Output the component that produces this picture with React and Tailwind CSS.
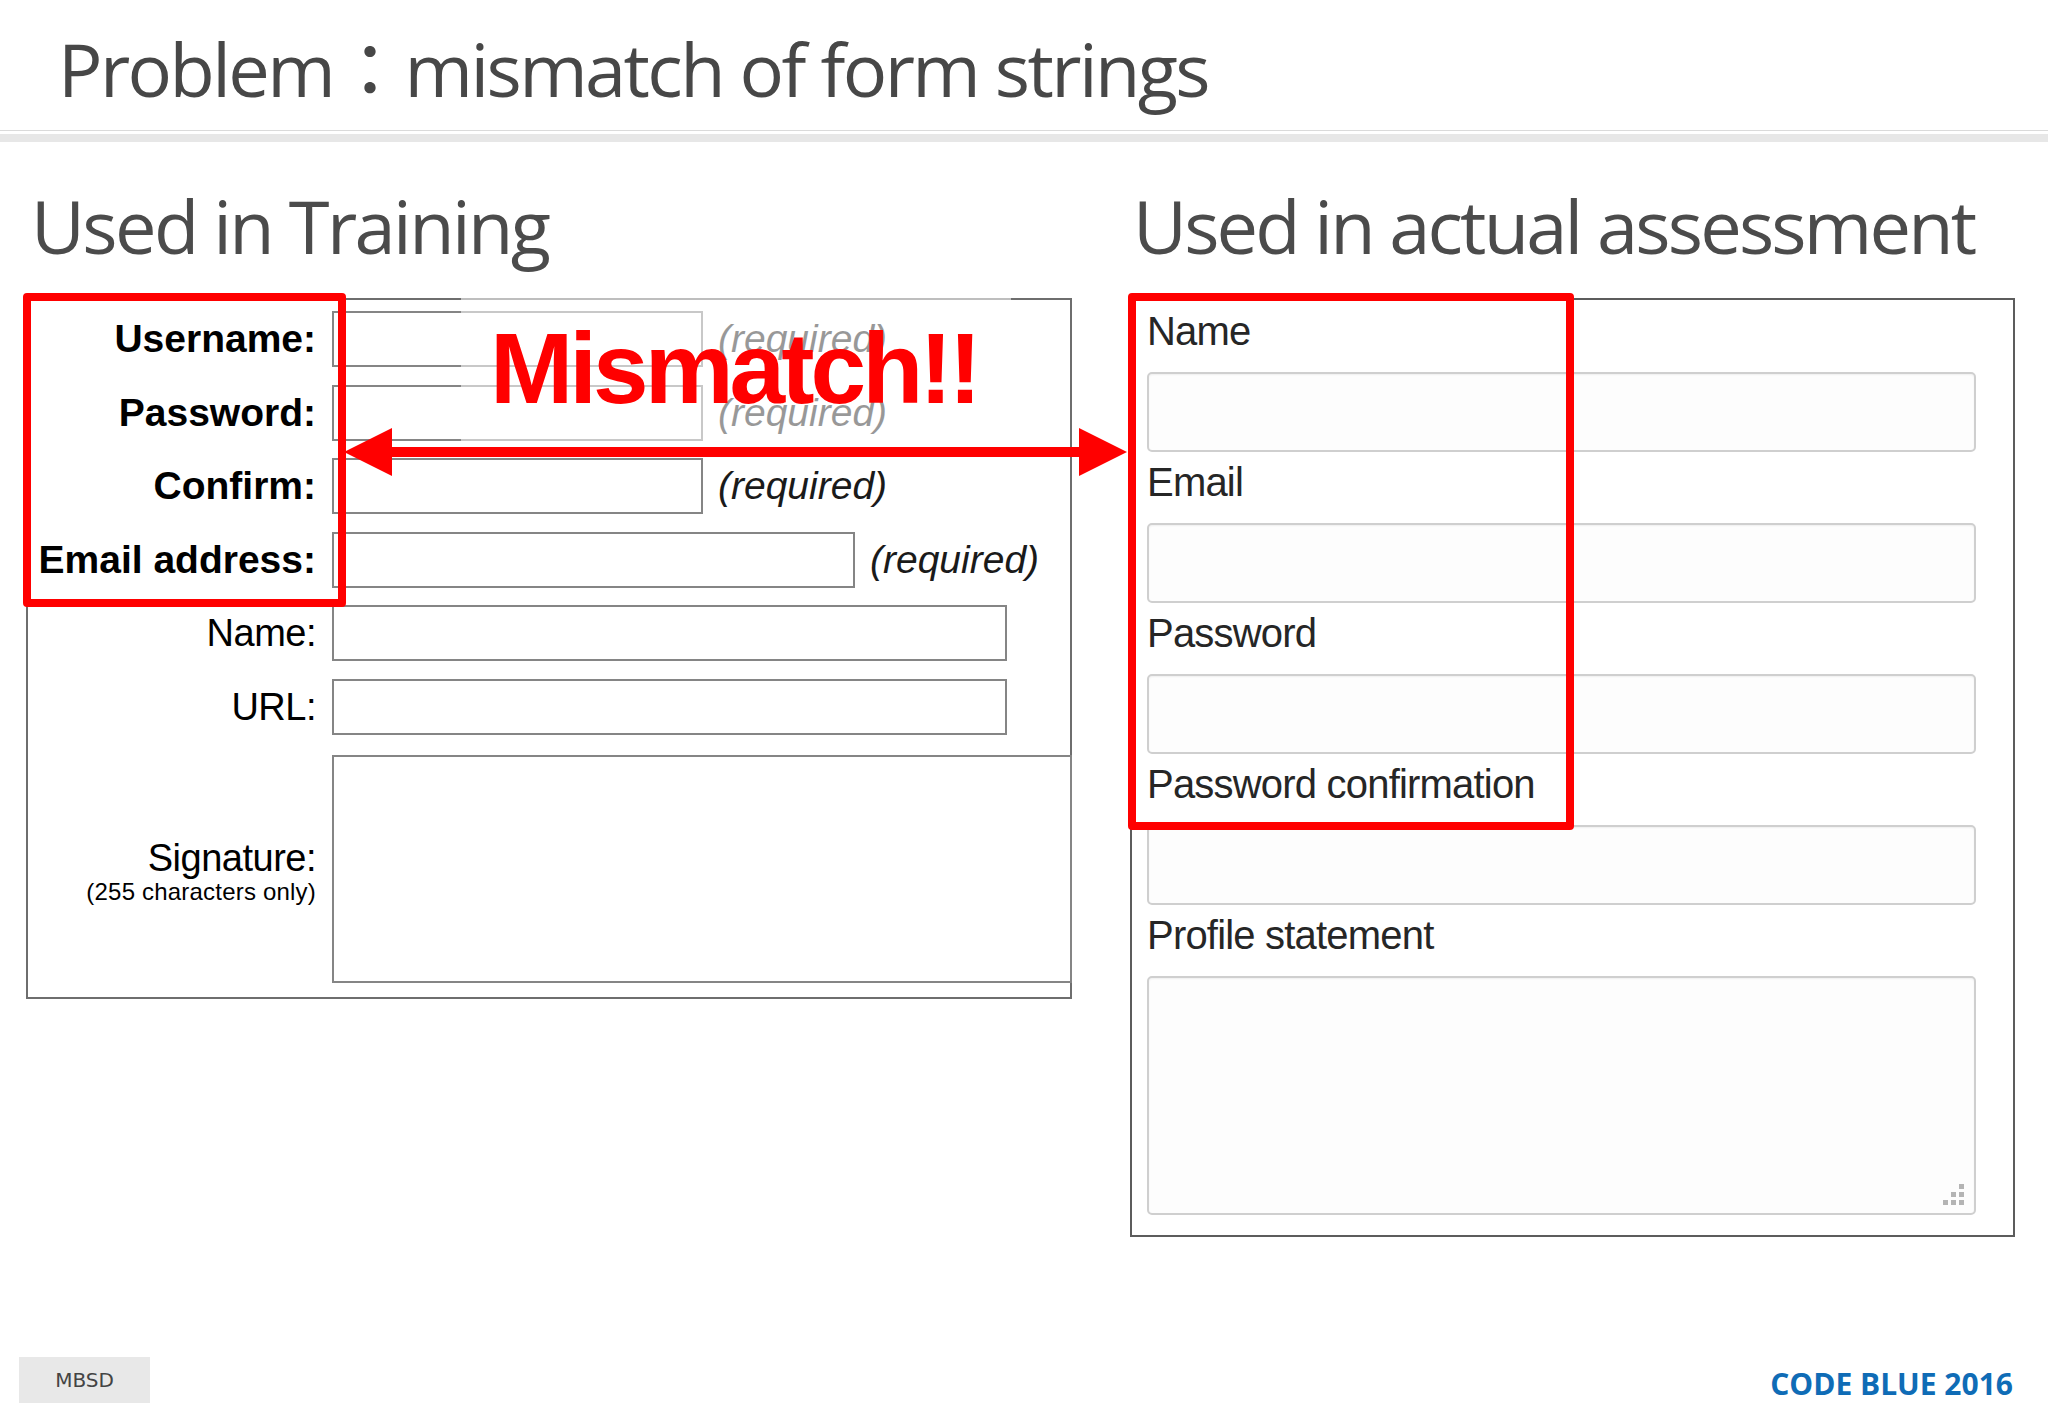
import React from "react";

const leftRows = [
  { label: "Username:", bold: true, w: "w-[371px]", req: true },
  { label: "Password:", bold: true, w: "w-[371px]", req: true },
  { label: "Confirm:", bold: true, w: "w-[371px]", req: true },
  { label: "Email address:", bold: true, w: "w-[523px]", req: true },
  { label: "Name:", bold: false, w: "w-[675px]", req: false },
  { label: "URL:", bold: false, w: "w-[675px]", req: false },
];

const rightRows = ["Name", "Email", "Password", "Password confirmation"];

function ResizeGrip() {
  return (
    <svg className="absolute right-[8px] bottom-[6px]" width="26" height="26" viewBox="0 0 26 26">
      <rect x="19" y="3" width="5" height="5" fill="#b4b4b4" />
      <rect x="11" y="11" width="5" height="5" fill="#b4b4b4" />
      <rect x="19" y="11" width="5" height="5" fill="#b4b4b4" />
      <rect x="3" y="19" width="5" height="5" fill="#b4b4b4" />
      <rect x="11" y="19" width="5" height="5" fill="#b4b4b4" />
      <rect x="19" y="19" width="5" height="5" fill="#b4b4b4" />
    </svg>
  );
}

export default function App() {
  return (
    <div className="relative w-[2048px] h-[1418px] bg-white overflow-hidden flex flex-col font-['Liberation_Sans',Arial,sans-serif]">
      {/* Title */}
      <div className="pl-[58px] pt-[19px] h-[119px] text-[74px] leading-[100px] text-[#474747] font-['Open_Sans','Noto_Sans_CJK_JP',sans-serif] tracking-[-2.6px] whitespace-nowrap">
        Problem：mismatch of form strings
      </div>
      <div className="mt-[11px] h-px bg-[#dadada]" />
      <div className="mt-[3px] h-[8px] bg-[#e7e7e7]" />

      {/* Main */}
      <div className="flex mt-[34px]">
        {/* Left column */}
        <div className="ml-[26px] w-[1046px] flex flex-col">
          <div className="pl-[5px] h-[100px] text-[74px] leading-[100px] text-[#4b4b4b] font-['Open_Sans',sans-serif] tracking-[-2.6px] whitespace-nowrap">
            Used in Training
          </div>
          <div className="mt-[22px] w-[1046px] border-2 border-[#6e6e6e] pt-[11px] pb-[14px] flex flex-col gap-[17.6px] bg-white">
            {leftRows.map((r) => (
              <div key={r.label} className="flex items-center h-[56px]">
                <div
                  className={
                    r.bold
                      ? "w-[288px] shrink-0 text-right text-[39px] leading-[56px] font-bold text-black whitespace-nowrap"
                      : "w-[288px] shrink-0 text-right text-[38px] leading-[56px] tracking-[-0.5px] text-black whitespace-nowrap"
                  }
                >
                  {r.label}
                </div>
                <div className={"ml-[16px] shrink-0 h-[56px] border-2 border-[#858585] bg-white " + r.w} />
                {r.req && (
                  <div className="ml-[15px] text-[39px] leading-[56px] italic text-[#1a1a1a] whitespace-nowrap">
                    (required)
                  </div>
                )}
              </div>
            ))}
            <div className="flex items-center mt-[2.4px]">
              <div className="w-[288px] shrink-0 flex flex-col items-end pt-[6px] text-black whitespace-nowrap">
                <div className="text-[38px] leading-[40px] tracking-[-0.5px]">Signature:</div>
                <div className="text-[24px] leading-[28px] tracking-[0.2px]">(255 characters only)</div>
              </div>
              <div className="ml-[16px] shrink-0 w-[740px] h-[228px] border-2 border-[#858585] bg-white" />
            </div>
          </div>
        </div>

        {/* Right column */}
        <div className="ml-[58px] w-[885px] flex flex-col">
          <div className="pl-[3px] h-[100px] text-[74px] leading-[100px] text-[#4b4b4b] font-['Open_Sans',sans-serif] tracking-[-2.8px] whitespace-nowrap">
            Used in actual assessment
          </div>
          <div className="mt-[22px] w-[885px] border-2 border-[#5c5c5c] pl-[15px] pr-[37px] pt-px pb-[20px] flex flex-col bg-white">
            {rightRows.map((l) => (
              <React.Fragment key={l}>
                <div className="h-[71px] text-[40px] leading-[60px] tracking-[-0.8px] text-[#262626] whitespace-nowrap">
                  {l}
                </div>
                <div className="h-[80px] border-2 border-[#cfcfcf] rounded-[5px] bg-[#fdfdfd] shadow-[inset_0_1px_2px_rgba(0,0,0,0.06)]" />
              </React.Fragment>
            ))}
            <div className="h-[71px] text-[40px] leading-[60px] tracking-[-0.8px] text-[#262626] whitespace-nowrap">
              Profile statement
            </div>
            <div className="relative h-[239px] border-2 border-[#cfcfcf] rounded-[5px] bg-[#fdfdfd] shadow-[inset_0_1px_2px_rgba(0,0,0,0.06)]">
              <ResizeGrip />
            </div>
          </div>
        </div>
      </div>

      {/* Footer */}
      <div className="mt-auto h-[61px] flex justify-between items-start pl-[19px] pr-[35px]">
        <div className="w-[131px] h-[46px] bg-[#e8e8e8] flex items-center justify-center text-[20px] text-[#444] font-['DejaVu_Sans',Verdana,sans-serif]">
          MBSD
        </div>
        <div className="mt-[7px] text-[30px] leading-[40px] font-bold text-[#0f6cb6] font-['Open_Sans',sans-serif] whitespace-nowrap">
          CODE BLUE 2016
        </div>
      </div>

      {/* Overlays */}
      <div className="absolute left-[461px] top-[290px] w-[550px] h-[157px] bg-white/55" />
      <div className="absolute left-[23px] top-[293px] w-[323px] h-[314px] border-8 border-[#ff0000] rounded-[4px]" />
      <div className="absolute left-[1128px] top-[293px] w-[446px] h-[537px] border-8 border-[#ff0000] rounded-[4px]" />
      <svg className="absolute left-[340px] top-[425px]" width="792" height="54" viewBox="0 0 792 54">
        <rect x="48" y="22" width="694" height="10" fill="#ff0000" />
        <polygon points="4,27 52,3 52,51" fill="#ff0000" />
        <polygon points="787,27 739,3 739,51" fill="#ff0000" />
      </svg>
      <div className="absolute left-[490px] top-[318px] text-[100px] leading-[100px] font-bold tracking-[-4px] text-[#ff0000] whitespace-nowrap">
        Mismatch!!
      </div>
    </div>
  );
}
